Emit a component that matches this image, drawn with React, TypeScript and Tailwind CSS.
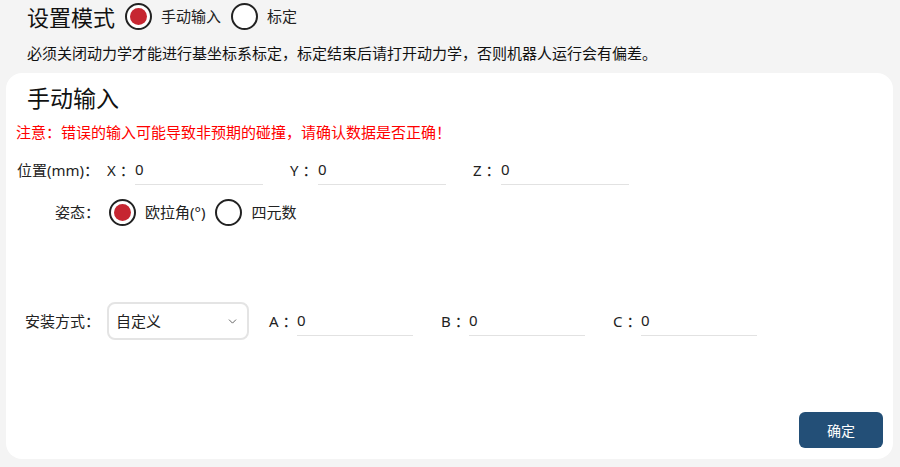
import { ChevronDown } from 'lucide-react';

const font = { fontFamily: '"Noto Sans", "Noto Sans CJK SC", sans-serif' };

const Radio = ({ checked, label }: { checked?: boolean; label: string }) => (
    <label className="flex items-center">
        <span className="w-[27px] h-[27px] rounded-full border-[2.5px] border-[#222] flex items-center justify-center bg-white">
            {checked && <span className="w-[17px] h-[17px] rounded-full bg-[#c62631]" />}
        </span>
        <span className="ml-[9px] text-[15px] text-[#222]">{label}</span>
    </label>
);

const Field = ({ label, width }: { label: string; width: string }) => (
    <div className="flex items-center">
        <span className="text-[15px] text-[#222] w-[28px] whitespace-pre">{label} ：</span>
        <div className={`${width} h-[30px] border-b border-[#e2e2e2] flex items-center text-[15px] text-[#222]`}>0</div>
    </div>
);

const App = () => {
    return (
        <div className="w-[900px] h-[467px] bg-[#f4f4f4] overflow-hidden flex flex-col" style={font}>
            <div className="flex items-center pl-[27px] h-[33px] gap-[10px]">
                <span className="text-[22px] text-[#111] leading-none">设置模式</span>
                <Radio checked label="手动输入" />
                <Radio label="标定" />
            </div>
            <p className="pl-[27px] mt-[10px] text-[15px] text-[#111] leading-[20px] whitespace-nowrap">
                必须关闭动力学才能进行基坐标系标定，标定结束后请打开动力学，否则机器人运行会有偏差。
            </p>

            <div className="mt-[10px] ml-[6px] w-[887px] h-[386px] bg-white rounded-[16px] relative">
                <h2 className="pl-[21px] pt-[10px] text-[23px] leading-[30px] text-[#111]">手动输入</h2>
                <p className="pl-[10px] mt-[9px] text-[15px] leading-[20px] text-[#ff0000]">
                    注意：错误的输入可能导致非预期的碰撞，请确认数据是否正确！
                </p>

                <div className="flex items-center pl-[11px] mt-[13px]">
                    <span className="text-[15px] text-[#222] w-[90px] whitespace-nowrap">位置(mm)：</span>
                    <div className="flex gap-[27px]">
                        <Field label="X" width="w-[128px]" />
                        <Field label="Y" width="w-[128px]" />
                        <Field label="Z" width="w-[128px]" />
                    </div>
                </div>

                <div className="flex items-center pl-[49px] mt-[13px] h-[28px] gap-[10px]">
                    <span className="text-[15px] text-[#222] w-[44px] whitespace-nowrap">姿态：</span>
                    <Radio checked label="欧拉角(°)" />
                    <Radio label="四元数" />
                </div>

                <div className="flex items-center pl-[19px] mt-[76px]">
                    <span className="text-[15px] text-[#222] w-[82px] whitespace-nowrap">安装方式：</span>
                    <div className="w-[142px] h-[38px] border-2 border-[#e4e4e4] rounded-[8px] flex items-center justify-between pl-[7px] pr-[8px] text-[15px] text-[#222]">
                        <span>自定义</span>
                        <ChevronDown className="w-[13px] h-[13px] text-[#444]" strokeWidth={1.5} />
                    </div>
                    <div className="flex gap-[28px] ml-[20px]">
                        <Field label="A" width="w-[116px]" />
                        <Field label="B" width="w-[116px]" />
                        <Field label="C" width="w-[116px]" />
                    </div>
                </div>

                <button className="absolute right-[10px] bottom-[11px] w-[84px] h-[36px] rounded-[6px] bg-[#234f77] text-white text-[14px]">
                    确定
                </button>
            </div>
        </div>
    );
};

export default App;
